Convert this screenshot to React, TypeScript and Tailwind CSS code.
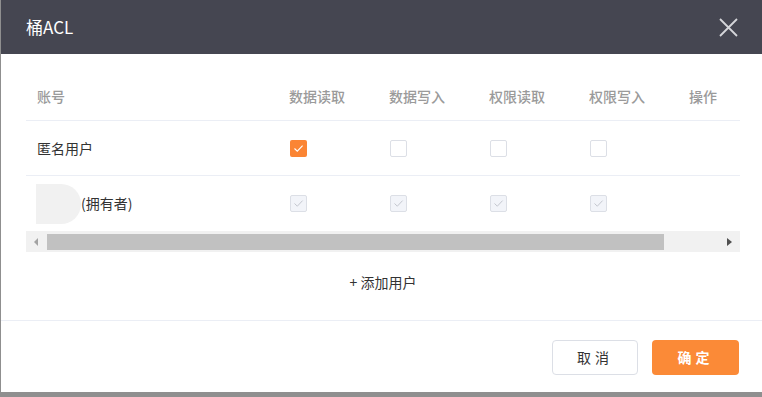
const font = { fontFamily: '"Noto Sans CJK SC", "Noto Sans", sans-serif' };

function Check({ state }: { state: "on" | "off" | "disabled" }) {
  if (state === "on") {
    return (
      <span className="flex h-[17px] w-[17px] items-center justify-center rounded-[2px] bg-[#fb8534]">
        <svg width="11" height="9" viewBox="0 0 11 9" fill="none">
          <path d="M1.5 4.5 L4.3 7.2 L9.6 1.6" stroke="#fff" strokeWidth="1.1" />
        </svg>
      </span>
    );
  }
  if (state === "disabled") {
    return (
      <span className="flex h-[17px] w-[17px] items-center justify-center rounded-[2px] border border-[#dcdfe6] bg-[#f2f4f9]">
        <svg width="11" height="9" viewBox="0 0 11 9" fill="none">
          <path d="M1.5 4.5 L4.3 7.2 L9.6 1.6" stroke="#c4c7cf" strokeWidth="1" />
        </svg>
      </span>
    );
  }
  return <span className="block h-[17px] w-[17px] rounded-[2px] border border-[#dcdfe6] bg-white" />;
}

const cols = ["数据读取", "数据写入", "权限读取", "权限写入"];

export default function App() {
  return (
    <div className="h-[397px] w-[762px] overflow-hidden bg-[#8f8f8f] pl-[1px]" style={font}>
      <div className="flex h-[392px] flex-col bg-white">
        <div className="flex h-[54px] shrink-0 items-center justify-between bg-[#454651] pl-[25px] pr-[24px]">
          <span className="text-[17px] text-white">桶ACL</span>
          <svg width="19" height="19" viewBox="0 0 19 19" fill="none">
            <path d="M1 1 L18 18 M18 1 L1 18" stroke="#d5d6da" strokeWidth="1.8" />
          </svg>
        </div>

        <div className="flex flex-col pl-[25px] pr-[22px] pt-[32px]">
          <div className="flex h-[35px] items-start border-b border-[#ebeef5] text-[14px] font-medium text-[#9a9a9a]">
            <div className="w-[252px] pl-[11px]">账号</div>
            {cols.map((c) => (
              <div key={c} className="w-[100px] pl-[11px]">
                {c}
              </div>
            ))}
            <div className="pl-[11px]">操作</div>
          </div>

          <div className="flex h-[55px] items-center border-b border-[#ebeef5] text-[14px] text-[#333]">
            <div className="w-[252px] pl-[11px]">匿名用户</div>
            {["on", "off", "off", "off"].map((s, i) => (
              <div key={i} className="w-[100px] pl-[12px]">
                <Check state={s as "on" | "off"} />
              </div>
            ))}
          </div>

          <div className="flex h-[55px] items-center text-[14px] text-[#333]">
            <div className="flex w-[252px] items-center pl-[10px]">
              <span className="h-[40px] w-[45px] rounded-r-[20px] bg-[#f1f1f1]" />
              <span>(拥有者)</span>
            </div>
            {[0, 1, 2, 3].map((i) => (
              <div key={i} className="w-[100px] pl-[12px]">
                <Check state="disabled" />
              </div>
            ))}
          </div>

          <div className="flex h-[21px] items-center bg-[#f1f1f1]">
            <span className="flex w-[21px] justify-center">
              <svg width="5" height="8" viewBox="0 0 5 8">
                <path d="M4 0 L0 4 L4 8 Z" fill="#a3a3a3" />
              </svg>
            </span>
            <span className="h-[16px] w-[617px] bg-[#c1c1c1]" />
            <span className="flex-1" />
            <span className="flex w-[21px] justify-center">
              <svg width="5" height="8" viewBox="0 0 5 8">
                <path d="M0 0 L5 4 L0 8 Z" fill="#505050" />
              </svg>
            </span>
          </div>

          <div className="flex h-[68px] items-start justify-center pt-[21px] text-[14px] leading-[18px] text-[#333]">
            + 添加用户
          </div>
        </div>

        <div className="flex flex-1 items-start justify-end gap-[14px] border-t border-[#ebeef5] pr-[23px] pt-[19px]">
          <button className="h-[35px] w-[86px] rounded-[4px] border border-[#dcdfe6] bg-white text-[14px] tracking-[4px] text-[#333]">
            取消
          </button>
          <button className="h-[35px] w-[87px] rounded-[4px] bg-[#fb8a37] text-[14px] font-bold tracking-[4px] text-white">
            确定
          </button>
        </div>
      </div>
    </div>
  );
}
